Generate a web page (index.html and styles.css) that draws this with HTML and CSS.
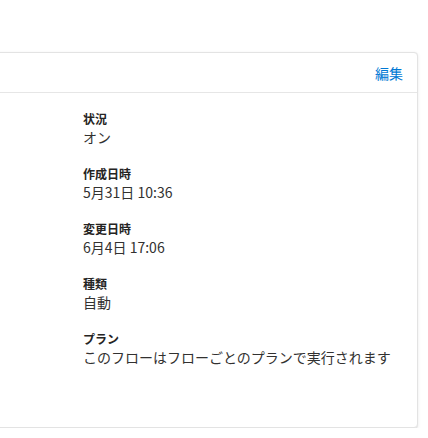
FILE: index.html
```html
<!DOCTYPE html>
<html lang="ja">
<head>
<meta charset="utf-8">
<link rel="stylesheet" href="styles.css">
</head>
<body>
<div class="card">
  <div class="card-header">
    <a class="edit" href="#">編集</a>
  </div>
  <div class="card-body">
    <div class="field">
      <div class="label">状況</div>
      <div class="value">オン</div>
    </div>
    <div class="field">
      <div class="label">作成日時</div>
      <div class="value">5月31日 10:36</div>
    </div>
    <div class="field">
      <div class="label">変更日時</div>
      <div class="value">6月4日 17:06</div>
    </div>
    <div class="field">
      <div class="label">種類</div>
      <div class="value">自動</div>
    </div>
    <div class="field">
      <div class="label">プラン</div>
      <div class="value">このフローはフローごとのプランで実行されます</div>
    </div>
  </div>
</div>
</body>
</html>
```
FILE: styles.css
```css
html, body {
  margin: 0;
  padding: 0;
  background: #ffffff;
}
body {
  font-family: "Noto Sans CJK JP", "Noto Sans", sans-serif;
  color: #323130;
  padding-top: 52px;
}
.card {
  margin-left: -10px;
  width: 428px;
  height: 376px;
  box-sizing: border-box;
  border: 1px solid #e3e3e3;
  border-radius: 4px;
  box-shadow: 0 1.6px 3.6px rgba(0,0,0,0.08), 0 0.3px 0.9px rgba(0,0,0,0.06);
  background: #fff;
}
.card-header {
  height: 39px;
  border-bottom: 1px solid #e6e6e6;
  display: flex;
  align-items: center;
  justify-content: flex-end;
  padding-right: 14px;
}
.edit {
  color: #0078d4;
  text-decoration: none;
  font-size: 14px;
  line-height: 20px;
}
.card-body {
  padding: 18px 0 0 92px;
  display: flex;
  flex-direction: column;
  gap: 19px;
}
.label {
  font-size: 12px;
  font-weight: 600;
  line-height: 16px;
  color: #252423;
}
.value {
  font-size: 14px;
  line-height: 20px;
  color: #323130;
}
```
